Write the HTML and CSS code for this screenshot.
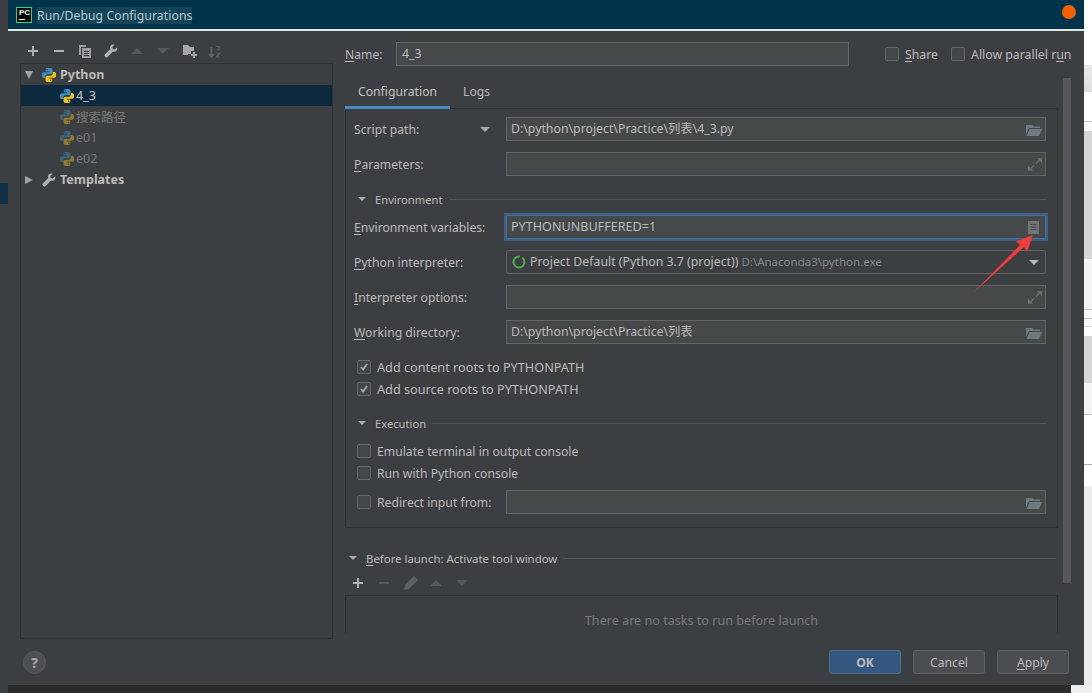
FILE: index.html
```html
<!DOCTYPE html>
<html lang="en">
<head>
<meta charset="utf-8">
<title>Run/Debug Configurations</title>
<link rel="stylesheet" href="styles.css">
</head>
<body>
<svg class="defs" width="0" height="0" aria-hidden="true">
  <defs>
    <symbol id="py" viewBox="1 1 14 14">
      <path fill="#3d8fc4" d="M8 .8C5.600.8 4.700 1.700 4.700 3v1.600h3.500v.6H3C1.600 5.200.8 6.300.8 8.100c0 1.900.9 3 2.100 3h1.400V9.300c0-1.200 1-2.100 2.200-2.100h3.200c1 0 1.800-.8 1.800-1.800V3c0-1.300-1.200-2.200-3.500-2.200z"/>
      <circle cx="6.200" cy="2.800" r=".7" fill="#3c3f41"/>
      <path fill="#f2c417" d="M8 15.200c2.400 0 3.300-.9 3.300-2.200v-1.600H7.800v-.6H13c1.400 0 2.200-1.100 2.200-2.900 0-1.900-.9-3-2.100-3h-1.400v1.800c0 1.200-1 2.100-2.200 2.100H6.300c-1 0-1.800.8-1.800 1.800V13c0 1.300 1.200 2.200 3.500 2.200z"/>
      <circle cx="9.800" cy="13.200" r=".7" fill="#3c3f41"/>
    </symbol>
    <symbol id="wrench" viewBox="0 0 16 16">
      <path fill="#afb1b3" d="M15 3.600l-2.800 2.600-2.200-.6-.6-2.200L12.100.8C10.300.2 8.400.700 7.500 2.100c-.7 1.100-.8 2.400-.3 3.500L.9 12c-.6.600-.6 1.500 0 2.100l.9.9c.6.600 1.500.6 2.100 0l6.400-6.300c1.100.4 2.400.3 3.400-.4 1.400-1 1.900-3 1.300-4.700z"/>
    </symbol>
    <symbol id="folder" viewBox="0 0 16 12">
      <path fill="#6e7a80" d="M0 1h6l1.500 1.500H14V4H3L0 10.500z"/>
      <path fill="#6e7a80" d="M3.600 5H16l-2.800 7H.6z"/>
    </symbol>
    <symbol id="expand" viewBox="0 0 14 13">
      <path fill="none" stroke="#6c7071" stroke-width="1.500" d="M8 5.500L13 .8M1 12.200L6 7.500"/>
      <path fill="#6c7071" d="M9 .3h5v5zM0 7.700v5h5z"/>
    </symbol>
    <symbol id="tick" viewBox="0 0 14 14">
      <path fill="none" stroke="#a8aaab" stroke-width="2" d="M3.500 7l2.500 3 4.500-6.500"/>
    </symbol>
  </defs>
</svg>

<div class="screen">
  <div class="top">
    <div class="dialog">
      <header class="titlebar">
        <span class="pc-logo"><span class="pc-text">PC</span><span class="pc-bar"></span></span>
        <span class="title-text">Run/Debug Configurations</span>
        <span class="dot"></span>
      </header>

      <div class="main">
        <aside class="left">
          <div class="toolbar">
            <svg class="ti ti-plus" viewBox="0 0 10 10"><path fill="#afb1b3" d="M4 0h2v4h4v2H6v4H4V6H0V4h4z"/></svg>
            <svg class="ti ti-minus" viewBox="0 0 10 10"><path fill="#afb1b3" d="M0 4h10v2H0z"/></svg>
            <svg class="ti ti-copy" viewBox="0 0 12 13"><path fill="#9a9c9e" d="M0 0h7v2H2v8H0z"/><path fill="#9a9c9e" d="M3 3h9v10H3zm2 3v1h5V6zm0 2v1h5V8zm0 2v1h5v-1z" fill-rule="evenodd"/></svg>
            <svg class="ti ti-wrench"><use href="#wrench"/></svg>
            <svg class="ti ti-tri" viewBox="0 0 12 6"><path fill="#55585a" d="M0 6L6 0l6 6z"/></svg>
            <svg class="ti ti-tri" viewBox="0 0 12 6"><path fill="#55585a" d="M0 0h12L6 6z"/></svg>
            <svg class="ti ti-newfolder" viewBox="0 0 14 13"><path fill="#a4a6a8" d="M0 0h5l2 2h4v4H8v3H5v1H0z"/><path fill="#a4a6a8" d="M10 7h2v2h2v2h-2v2h-2v-2H8V9h2z"/></svg>
            <svg class="ti ti-sort" viewBox="0 0 13 13"><path fill="#5d6062" d="M2.500 2h2v7H7l-3.500 4L0 9h2.500z"/><path fill="none" stroke="#5d6062" stroke-width="1.200" d="M8 1.500h3v3.500H8.500M8.500 8h3.500l-3.500 4H12"/></svg>
          </div>
          <div class="tree">
            <div class="tree-row">
              <svg class="caret" viewBox="0 0 8 8"><path fill="#a0a2a4" d="M0 0h8L4 8z"/></svg>
              <svg class="py"><use href="#py"/></svg>
              <span class="tree-group">Python</span>
            </div>
            <div class="tree-row child selected">
              <svg class="py"><use href="#py"/></svg><span>4_3</span>
            </div>
            <div class="tree-row child muted">
              <svg class="py"><use href="#py"/></svg><span>搜索路径</span>
            </div>
            <div class="tree-row child muted">
              <svg class="py"><use href="#py"/></svg><span>e01</span>
            </div>
            <div class="tree-row child muted">
              <svg class="py"><use href="#py"/></svg><span>e02</span>
            </div>
            <div class="tree-row">
              <svg class="caret" viewBox="0 0 8 8"><path fill="#a0a2a4" d="M0 0l8 4-8 4z"/></svg>
              <svg class="py"><use href="#wrench"/></svg>
              <span class="tree-group">Templates</span>
            </div>
          </div>
        </aside>

        <section class="right">
          <div class="name-row">
            <label class="name-label"><u>N</u>ame:</label>
            <div class="field name-field">4_3</div>
            <span class="check share"><span class="box"></span><span><u>S</u>hare</span></span>
            <span class="check parallel"><span class="box"></span><span>Allow parallel r<u>u</u>n</span></span>
          </div>

          <div class="tabs">
            <span class="tab active">Configuration</span>
            <span class="tab">Logs</span>
          </div>

          <div class="panel">
            <div class="row">
              <label class="label label-script">Script path:</label>
              <svg class="script-caret" viewBox="0 0 10 5"><path fill="#a8aaac" d="M0 0h10L5 5z"/></svg>
              <div class="field">D:\python\project\Practice\列表\4_3.py<svg class="fi fi-folder"><use href="#folder"/></svg></div>
            </div>
            <div class="row">
              <label class="label"><u>P</u>arameters:</label>
              <div class="field"><svg class="fi fi-expand"><use href="#expand"/></svg></div>
            </div>

            <div class="heading env-heading">
              <svg class="head-caret" viewBox="0 0 8 4"><path fill="#a8aaac" d="M0 0h8L4 4z"/></svg>
              <span>Environment</span><span class="rule"></span>
            </div>

            <div class="row env-row">
              <label class="label"><u>E</u>nvironment variables:</label>
              <div class="field focused">PYTHONUNBUFFERED=1
                <svg class="fi fi-doc" viewBox="0 0 11 13"><path fill="#6f7476" fill-rule="evenodd" d="M0 0h11v13H0zm2.500 3v1h6V3zm0 2.500v1h6v-1zm0 2.500v1h6V8z"/></svg>
              </div>
            </div>
            <div class="row">
              <label class="label"><u>P</u>ython interpreter:</label>
              <div class="field combo">
                <svg class="spinner" viewBox="0 0 14 14"><circle cx="7" cy="7" r="5.500" fill="none" stroke="#4fae4e" stroke-width="2" stroke-dasharray="26 3" /></svg>
                <span class="combo-main">Project Default (Python 3.7 (project))</span>
                <span class="combo-path">D:\Anaconda3\python.exe</span>
                <svg class="combo-caret" viewBox="0 0 10 5"><path fill="#b5b7b9" d="M0 0h10L5 5z"/></svg>
              </div>
            </div>
            <div class="row">
              <label class="label"><u>I</u>nterpreter options:</label>
              <div class="field"><svg class="fi fi-expand"><use href="#expand"/></svg></div>
            </div>
            <div class="row">
              <label class="label"><u>W</u>orking directory:</label>
              <div class="field">D:\python\project\Practice\列表<svg class="fi fi-folder"><use href="#folder"/></svg></div>
            </div>

            <div class="check-row first-check wide"><span class="box"><svg viewBox="0 0 14 14"><use href="#tick"/></svg></span><span>Add content roots to PYTHONPATH</span></div>
            <div class="check-row wide"><span class="box"><svg viewBox="0 0 14 14"><use href="#tick"/></svg></span><span>Add source roots to PYTHONPATH</span></div>

            <div class="heading exec-heading">
              <svg class="head-caret" viewBox="0 0 8 4"><path fill="#a8aaac" d="M0 0h8L4 4z"/></svg>
              <span>Execution</span><span class="rule"></span>
            </div>

            <div class="check-row emulate"><span class="box"></span><span>Emulate terminal in output console</span></div>
            <div class="check-row"><span class="box"></span><span>Run with Python console</span></div>
            <div class="row redirect">
              <span class="redirect-label"><span class="box"></span><span>Redirect input from:</span></span>
              <div class="field"><svg class="fi fi-folder"><use href="#folder"/></svg></div>
            </div>
          </div>

          <div class="heading before-heading">
            <svg class="head-caret" viewBox="0 0 8 4"><path fill="#a8aaac" d="M0 0h8L4 4z"/></svg>
            <span><u>B</u>efore launch: Activate tool window</span><span class="rule"></span>
          </div>
          <div class="task-toolbar">
            <svg class="ti ti-plus" viewBox="0 0 10 10"><path fill="#afb1b3" d="M4 0h2v4h4v2H6v4H4V6H0V4h4z"/></svg>
            <svg class="ti ti-minus" viewBox="0 0 10 10"><path fill="#55585a" d="M0 4h10v2H0z"/></svg>
            <svg class="ti ti-pencil" viewBox="0 0 14 14"><path fill="#5d6062" d="M10 0l4 4-9 9-5 1 1-5z"/></svg>
            <svg class="ti ti-tri" viewBox="0 0 12 6"><path fill="#55585a" d="M0 6L6 0l6 6z"/></svg>
            <svg class="ti ti-tri" viewBox="0 0 12 6"><path fill="#55585a" d="M0 0h12L6 6z"/></svg>
          </div>
          <div class="tasks">There are no tasks to run before launch</div>

          <div class="scrollbar"></div>
        </section>
      </div>

      <footer class="footer">
        <span class="help">?</span>
        <div class="buttons">
          <span class="btn primary">OK</span>
          <span class="btn">Cancel</span>
          <span class="btn"><u>A</u>pply</span>
        </div>
      </footer>
    </div>

    <div class="stripes">
      <span class="s s-a"></span><span class="s s-b"></span><span class="s s-c"></span>
      <span class="s s-d"></span><span class="s s-e"></span><span class="s s-f"></span>
      <span class="s s-g"></span><span class="s s-h"></span><span class="s s-i"></span>
      <span class="s s-j"></span><span class="s s-k"></span><span class="s s-l"></span>
      <span class="s s-m"></span>
    </div>
  </div>

  <div class="bottom">
    <span class="b-left"></span><span class="b-mid"></span><span class="b-right"></span>
  </div>

  <span class="side-patch"></span>

  <svg class="arrow" viewBox="0 0 1092 693"><path fill="#f23b3b" d="M973 293L1020 245l-4-3.500 17-6.500-6 17-3-5z"/></svg>
</div>
</body>
</html>
```

FILE: styles.css
```css
* { box-sizing: border-box; }
html, body { margin: 0; padding: 0; }
body {
  background: #fff;
  font-family: "Noto Sans", "Noto Sans CJK SC", sans-serif;
  font-size: 12.2px;
  color: #bbbbbb;
  overflow: hidden;
}
.defs { position: absolute; }
u { text-underline-offset: 2px; }

.screen { position: relative; width: 1092px; height: 693px; overflow: hidden; display: flex; flex-direction: column; }
.top { display: flex; height: 685px; }
.bottom { display: flex; height: 8px; }
.b-left { width: 8px; background: #3c3f41; }
.b-mid { width: 1063px; background: #2b2b2b; }
.b-right { flex: 1; background: #eeeeee; }
.side-patch { position: absolute; left: 0; top: 183px; width: 8px; height: 21px; background: #0d3047; }
.arrow { position: absolute; left: 0; top: 0; width: 1092px; height: 693px; pointer-events: none; }

.dialog { width: 1084px; height: 685px; background: #3c3f41; display: flex; flex-direction: column; }

.titlebar {
  height: 31px; margin-left: 8px; padding: 1px 8px 0;
  background: #00344a; border-bottom: 2px solid #e4e6e6;
  display: flex; align-items: center; position: relative;
}
.pc-logo { width: 16px; height: 16px; background: #000; border: 1px solid #21d789; display: flex; flex-direction: column; padding: 1px 2px; }
.pc-text { font: bold 8px/8px "Liberation Sans", sans-serif; color: #fff; }
.pc-bar { width: 6px; height: 1px; margin-top: 2px; background: #fff; }
.title-text { margin-left: 5px; height: 17px; line-height: 17px; width: 155px; white-space: nowrap; background: #134458; color: #b9cbd3; font-size: 12.2px; letter-spacing: .08px; }
.dot { position: absolute; left: 1054px; top: 5px; width: 14px; height: 14px; border-radius: 50%; background: #f56000; }

.main { display: flex; height: 608px; padding-left: 20px; }

.left { width: 313px; display: flex; flex-direction: column; }
.toolbar { height: 32px; display: flex; align-items: center; position: relative; flex: none; padding-top: 8px; padding-left: 8px; }
.ti { display: block; flex: none; }
.ti-plus, .ti-minus { width: 10px; height: 10px; margin-right: 16px; }
.ti-minus { margin-right: 15px; }
.ti-copy { width: 12px; height: 13px; margin-right: 13px; }
.ti-wrench { width: 14px; height: 14px; margin-right: 13px; }
.ti-tri { width: 12px; height: 6px; margin-right: 14px; }
.ti-newfolder { width: 14px; height: 13px; margin-right: 11px; }
.ti-sort { width: 13px; height: 13px; }
.ti-pencil { width: 14px; height: 14px; margin-right: 12px; }

.tree { flex: 1; border: 1px solid #2f3133; padding-top: 0; }
.tree-row { height: 21px; display: flex; align-items: center; padding-left: 4px; font-size: 12.5px; }
.caret { width: 8px; height: 8px; margin-right: 9px; flex: none; }
.py { width: 14px; height: 14px; flex: none; margin-right: 4px; }
.tree-group { font-weight: 700; }
.child { padding-left: 39px; }
.child .py { margin-right: 2px; }
.selected { background: #0d293e; color: #c4c6c8; }
.muted { color: #77797b; }
.muted .py { opacity: .45; }

.right { position: relative; width: 728px; height: 602px; margin-left: 12px; overflow: hidden; }

.name-row { display: flex; align-items: center; height: 24px; margin-top: 11px; }
.name-label { width: 51px; flex: none; }
.check { display: flex; align-items: center; white-space: nowrap; flex: none; font-size: 12.3px; }
.check .box { margin-right: 6px; }
.share { margin-left: 36px; }
.parallel { margin-left: 13px; }
.box { width: 14px; height: 14px; border: 1px solid #646668; border-radius: 2px; background: #43474a; flex: none; display: block; }
.box svg { display: block; width: 12px; height: 12px; }

.field {
  position: relative; flex: 1; height: 24px; line-height: 22px; font-size: 12.3px;
  background: #45494a; border: 1px solid #646464; padding: 0 4px;
  white-space: nowrap; min-width: 0;
}
.name-row .name-field { flex: none; width: 453px; padding-left: 5px; }
.focused { outline: 2px solid #3d6185; outline-offset: 0; border-color: #466d94; font-size: 12.6px; }
.fi { position: absolute; display: block; }
.fi-folder { right: 3px; top: 6px; width: 16px; height: 12px; }
.fi-expand { right: 3px; top: 5px; width: 14px; height: 13px; }
.fi-doc { right: 6px; top: 5px; width: 11px; height: 13px; }

.tabs { display: flex; height: 32px; margin-top: 9px; }
.tab { padding: 8px 13px 0; line-height: 18px; }
.tab.active { width: 105px; height: 34px; border-bottom: 3px solid #4a88c7; color: #c0c2c4; position: relative; }
.tab + .tab { padding-left: 13px; }

.panel { width: 713px; margin-top: 1px; border: 1px solid #2f3133; padding: 8px 11px 13px 8px; background: #3c3f41; }
.row { display: flex; align-items: center; height: 24px; position: relative; }
.row + .row { margin-top: 11px; }
.label { width: 152px; flex: none; white-space: nowrap; }
.label-script { width: 126px; }
.script-caret { width: 10px; height: 5px; margin-right: 16px; flex: none; }

.heading { display: flex; align-items: center; height: 16px; white-space: nowrap; font-size: 11.2px; }
.head-caret { width: 8px; height: 4px; flex: none; margin-right: 9px; }
.rule { flex: 1; height: 1px; background: #515355; margin-left: 6px; }
.env-heading { margin: 15px 0 8px 4px; }
.env-heading + .row { margin-top: 0; }
.exec-heading { margin: 19px 0 13px 4px; }
.before-heading { margin: 22px 17px 0 4px; font-size: 11.4px; }

.check-row { display: flex; align-items: center; height: 14px; margin-top: 8px; margin-left: 3px; white-space: nowrap; }
.check-row .box { margin-right: 6px; }
.wide { font-size: 12.7px; }
.first-check { margin-top: 16px; }
.exec-heading + .check-row { margin-top: 0; }
.row.redirect { margin-top: 10px; margin-left: 3px; }
.redirect-label { width: 149px; flex: none; display: flex; align-items: center; white-space: nowrap; }
.redirect-label .box { margin-right: 6px; }

.combo { display: flex; align-items: center; border-radius: 3px; padding-left: 5px; background: #3c3f41; }
.spinner { width: 14px; height: 14px; flex: none; margin-right: 4px; }
.combo-path { margin-left: 3px; font-size: 11.5px; color: #85888a; }
.combo-caret { position: absolute; right: 6px; top: 9px; width: 10px; height: 5px; }

.task-toolbar { display: flex; align-items: center; height: 14px; margin-top: 10px; padding-left: 8px; }
.tasks { width: 713px; height: 60px; margin-top: 5px; border: 1px solid #2f3133; padding-top: 16px; line-height: 18px; font-size: 12.6px; text-align: center; color: #77797b; }

.scrollbar { position: absolute; left: 718px; top: 47px; width: 8px; height: 505px; background: #565859; }

.footer { display: flex; justify-content: space-between; align-items: center; height: 24px; margin-top: 11px; padding: 0 15px 0 23px; }
.help { width: 23px; height: 23px; border-radius: 50%; background: #4c5052; border: 1px solid #56595b; display: flex; align-items: center; justify-content: center; font-weight: 700; font-size: 14px; color: #a8aaac; }
.buttons { display: flex; gap: 12px; }
.btn { width: 72px; height: 24px; display: flex; align-items: center; justify-content: center; background: #4a4e50; border: 1px solid #5e6062; border-radius: 3px; }
.primary { background: #365880; border-color: #4c708c; font-weight: 700; color: #bbbbbb; }

.stripes { flex: 1; display: flex; flex-direction: column; }
.s { display: block; flex: none; }
.s-a { height: 65px; background: #ffffff; }
.s-b { height: 27px; background: linear-gradient(#eaeaea, #e0e0e0); }
.s-c { height: 30px; background: #ffffff; border-bottom: 1px solid #c8c8c8; }
.s-d { height: 9px; background: #fafafa; }
.s-e { height: 128px; background: #d8d8d8; }
.s-f { height: 51px; background: #f5f5f5; border-bottom: 1px solid #c4c4c4; }
.s-g { height: 9px; background: #fafafa; border-bottom: 1px solid #c4c4c4; }
.s-h { height: 8px; background: #fafafa; border-bottom: 1px solid #dcdcdc; }
.s-i { height: 9px; background: #fff; }
.s-j { height: 47px; background: #d8d8d8; }
.s-k { height: 32px; background: #f5f5f5; border-bottom: 1px solid #c4c4c4; }
.s-l { height: 50px; background: #ffffff; border-bottom: 1px solid #b0b0b0; }
.s-m { height: 220px; background: linear-gradient(#ffffff 0, #ffffff 21px, #ececec 22px); }
```
